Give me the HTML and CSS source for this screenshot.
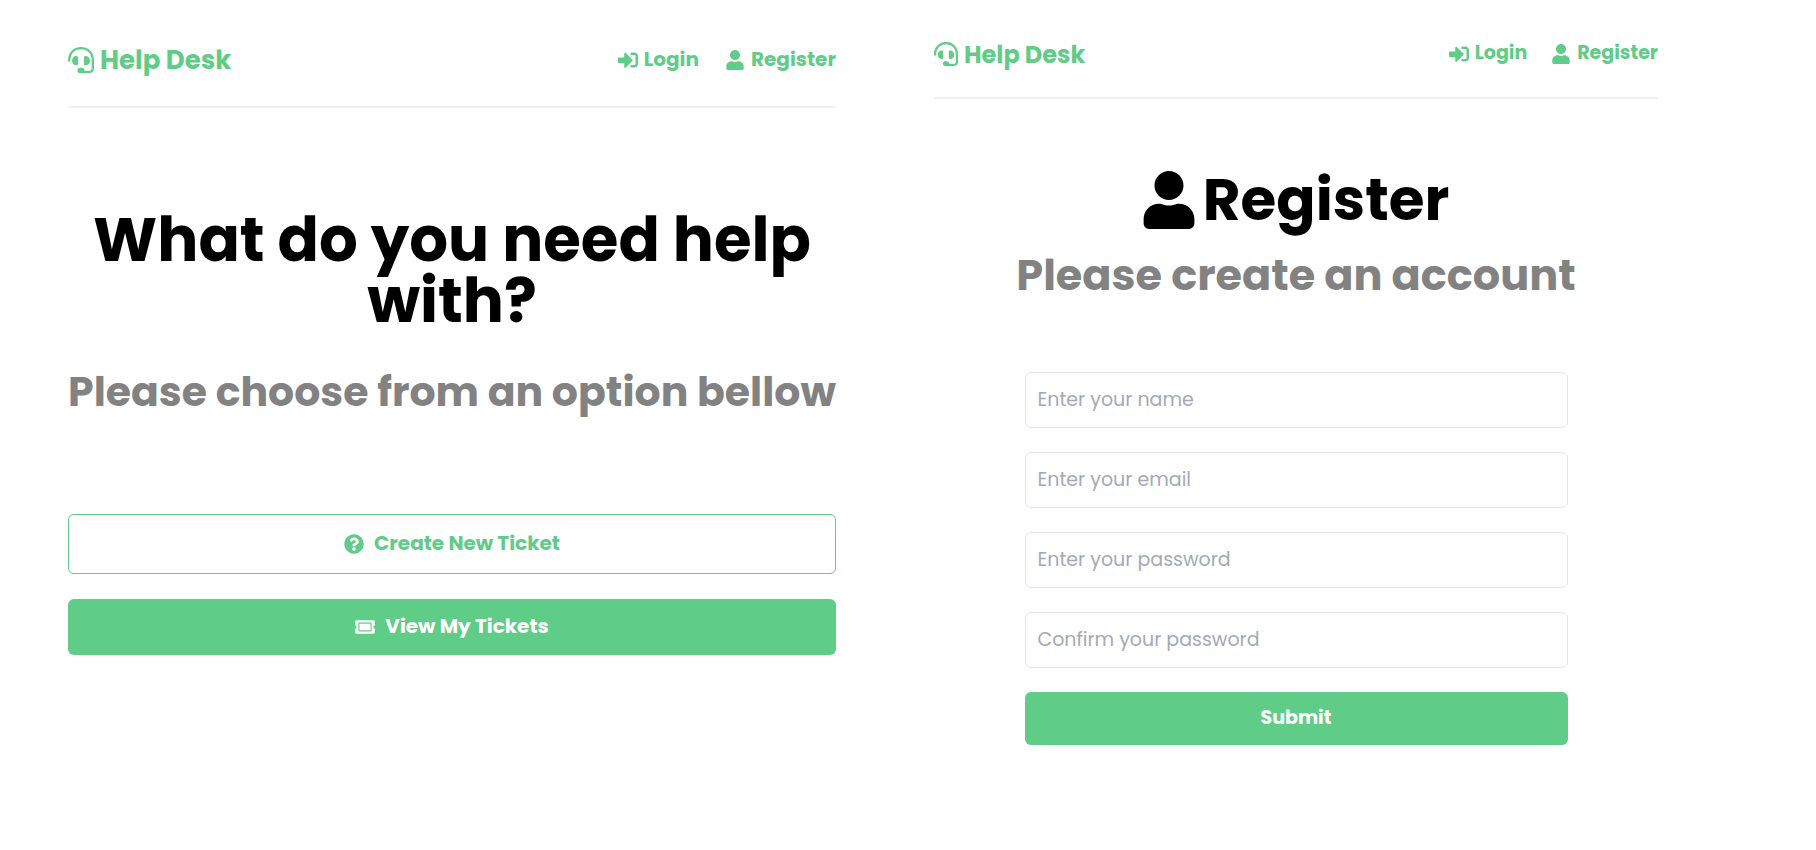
FILE: index.html
```html
<!DOCTYPE html>
<html lang="en">
<head>
<meta charset="utf-8">
<title>Help Desk</title>
<link rel="stylesheet" href="styles.css">
</head>
<body>
<svg class="sprite" aria-hidden="true">
  <symbol id="headset" viewBox="0 0 26 26">
    <path d="M1.200 14.500V13C1.200 6 6 1.200 13 1.200S24.800 6 24.800 13v8.800a3 3 0 0 1-3 3H13" fill="none" stroke="currentColor" stroke-width="2.300"/>
    <rect x="9.500" y="20.800" width="7" height="5.200" rx="2.600"/>
    <path d="M10 10.500v6.500a1.300 1.300 0 0 1-1.300 1.300C6 18.300 4 16.300 4 13.700s2-4.600 4.700-4.600A1.300 1.300 0 0 1 10 10.500zM16 10.500v6.500a1.300 1.300 0 0 0 1.300 1.300c2.700 0 4.700-2 4.700-4.600s-2-4.600-4.700-4.600A1.300 1.300 0 0 0 16 10.500z"/>
  </symbol>
  <symbol id="sign-in" viewBox="0 0 512 512"><path d="M416 448h-84c-6.600 0-12-5.400-12-12v-40c0-6.600 5.400-12 12-12h84c17.700 0 32-14.300 32-32V160c0-17.700-14.300-32-32-32h-84c-6.600 0-12-5.400-12-12V76c0-6.600 5.400-12 12-12h84c53 0 96 43 96 96v192c0 53-43 96-96 96zm-47-201L201 79c-15-15-41-4.500-41 17v96H24c-13.300 0-24 10.700-24 24v96c0 13.300 10.700 24 24 24h136v96c0 21.500 26 32 41 17l168-168c9.300-9.400 9.300-24.600 0-34z"/></symbol>
  <symbol id="user" viewBox="0 0 448 512"><path d="M224 256c70.700 0 128-57.300 128-128S294.700 0 224 0 96 57.300 96 128s57.300 128 128 128zm89.600 32h-16.700c-22.200 10.200-46.900 16-72.900 16s-50.600-5.800-72.900-16h-16.700C60.200 288 0 348.200 0 422.400V464c0 26.500 21.500 48 48 48h352c26.500 0 48-21.500 48-48v-41.600c0-74.200-60.200-134.400-134.400-134.400z"/></symbol>
  <symbol id="question" viewBox="0 0 512 512"><path d="M504 256c0 136.997-111.043 248-248 248S8 392.997 8 256C8 119.083 119.043 8 256 8s248 111.083 248 248zM262.655 90c-54.497 0-89.255 22.957-116.549 63.758-3.536 5.286-2.353 12.415 2.715 16.258l34.699 26.310c5.205 3.947 12.621 3.008 16.665-2.122 17.864-22.658 30.113-35.797 57.303-35.797 20.429 0 45.698 13.148 45.698 32.958 0 14.976-12.363 22.667-32.534 33.976C247.128 238.528 216 254.941 216 296v4c0 6.627 5.373 12 12 12h56c6.627 0 12-5.373 12-12v-1.333c0-28.462 83.186-29.647 83.186-106.667 0-58.002-60.165-102-116.531-102zM256 338c-25.365 0-46 20.635-46 46 0 25.364 20.635 46 46 46s46-20.636 46-46c0-25.365-20.635-46-46-46z"/></symbol>
  <symbol id="ticket" viewBox="0 0 576 512"><path d="M128 160h320v192H128V160zm400 96c0 26.510 21.490 48 48 48v96c0 26.510-21.490 48-48 48H48c-26.510 0-48-21.490-48-48v-96c26.510 0 48-21.490 48-48s-21.490-48-48-48v-96c0-26.510 21.490-48 48-48h480c26.510 0 48 21.490 48 48v96c-26.510 0-48 21.490-48 48zm-48-104c0-13.255-10.745-24-24-24H120c-13.255 0-24 10.745-24 24v208c0 13.255 10.745 24 24 24h336c13.255 0 24-10.745 24-24V152z"/></symbol>
</svg>
<main class="screens">
  <section class="screen screen-home">
    <header class="header">
      <a class="brand" href="#home"><svg class="icon"><use href="#headset"/></svg>Help Desk</a>
      <nav class="nav">
        <a href="#login"><svg class="icon"><use href="#sign-in"/></svg>Login</a>
        <a href="#register"><svg class="icon"><use href="#user"/></svg>Register</a>
      </nav>
    </header>
    <div class="heading">
      <h1>What do you need help with?</h1>
      <p>Please choose from an option bellow</p>
    </div>
    <div class="actions">
      <button class="btn btn-outline" type="button"><svg class="icon"><use href="#question"/></svg>Create New Ticket</button>
      <button class="btn" type="button"><svg class="icon"><use href="#ticket"/></svg>View My Tickets</button>
    </div>
  </section>
  <section class="screen screen-register" id="register">
    <header class="header">
      <a class="brand" href="#home"><svg class="icon"><use href="#headset"/></svg>Help Desk</a>
      <nav class="nav">
        <a href="#login"><svg class="icon"><use href="#sign-in"/></svg>Login</a>
        <a href="#register"><svg class="icon"><use href="#user"/></svg>Register</a>
      </nav>
    </header>
    <div class="heading">
      <h1><svg class="icon"><use href="#user"/></svg>Register</h1>
      <p>Please create an account</p>
    </div>
    <form class="form">
      <input type="text" aria-label="Name" placeholder="Enter your name">
      <input type="email" aria-label="Email" placeholder="Enter your email">
      <input type="password" aria-label="Password" placeholder="Enter your password">
      <input type="password" aria-label="Confirm password" placeholder="Confirm your password">
      <button class="btn" type="submit">Submit</button>
    </form>
  </section>
</main>
</body>
</html>
```
FILE: styles.css
```css
* { box-sizing: border-box; }

body {
  margin: 0;
  background: #fff;
  color: #000;
  font-family: Poppins, Inter, sans-serif;
}

.sprite { display: none; }

.icon {
  display: block;
  flex: none;
  fill: currentColor;
}

h1, p { margin: 0; font-weight: 700; }

.screens {
  display: grid;
  grid-template-columns: 768fr 724fr;
  gap: 98px;
  padding: 0 158px 0 68px;
}

.header {
  display: flex;
  justify-content: space-between;
  align-items: center;
  border-bottom: 2px solid #f0f0f0;
}

.header a {
  display: flex;
  align-items: center;
  color: #5fcc87;
  font-weight: 700;
  text-decoration: none;
}

.header .brand { gap: 6px; }
.nav { display: flex; gap: 26px; padding-bottom: 3px; }
.nav a { gap: 6px; }
.nav .icon, .btn .icon { width: 20px; height: 20px; margin-top: 3px; }

.screen-home .header { height: 108px; padding-top: 14px; }
.screen-home .brand { font-size: 26px; }
.screen-home .brand .icon { width: 26px; height: 26px; }
.screen-home .nav { font-size: 20px; }

.screen-register .header { height: 99px; padding-top: 11px; }
.screen-register .brand { font-size: 24px; }
.screen-register .brand .icon { width: 24px; height: 24px; }
.screen-register .nav { font-size: 19px; gap: 24px; }

.heading { text-align: center; }
.heading p { margin: 0 -4px; color: #828282; }

.screen-home h1 { margin-top: 101px; font-size: 61px; line-height: 61px; }
.screen-home .heading p { margin-top: 30px; font-size: 41px; line-height: 62px; }

.screen-register h1 {
  display: flex;
  justify-content: center;
  align-items: center;
  gap: 8px;
  margin-top: 72px;
  font-size: 58px;
  line-height: 58px;
}
.screen-register h1 .icon { width: 52px; height: 58px; }
.screen-register .heading p { margin-top: 18px; font-size: 43px; line-height: 56px; }

.btn {
  display: flex;
  justify-content: center;
  align-items: center;
  gap: 10px;
  width: 100%;
  height: 56px;
  padding: 0 0 3px;
  border: 0;
  border-radius: 6px;
  background: #5fcc87;
  color: #fff;
  font: inherit;
  font-size: 20px;
  font-weight: 700;
}
.btn-outline {
  height: 60px;
  border: 1px solid #5fcc87;
  background: #fff;
  color: #5fcc87;
}

.actions { display: grid; gap: 25px; margin-top: 91px; }

.form {
  display: grid;
  gap: 24px;
  width: 75%;
  margin: 69px auto 0;
}
.form input {
  width: 100%;
  height: 56px;
  padding: 0 12px 2px;
  border: 1px solid #e6e6e6;
  border-radius: 6px;
  background: #fff;
  color: #000;
  font: inherit;
  font-size: 19px;
}
.form input::placeholder { color: #a3a9b5; opacity: 1; }
.form .btn { height: 53px; font-size: 19px; }
```
